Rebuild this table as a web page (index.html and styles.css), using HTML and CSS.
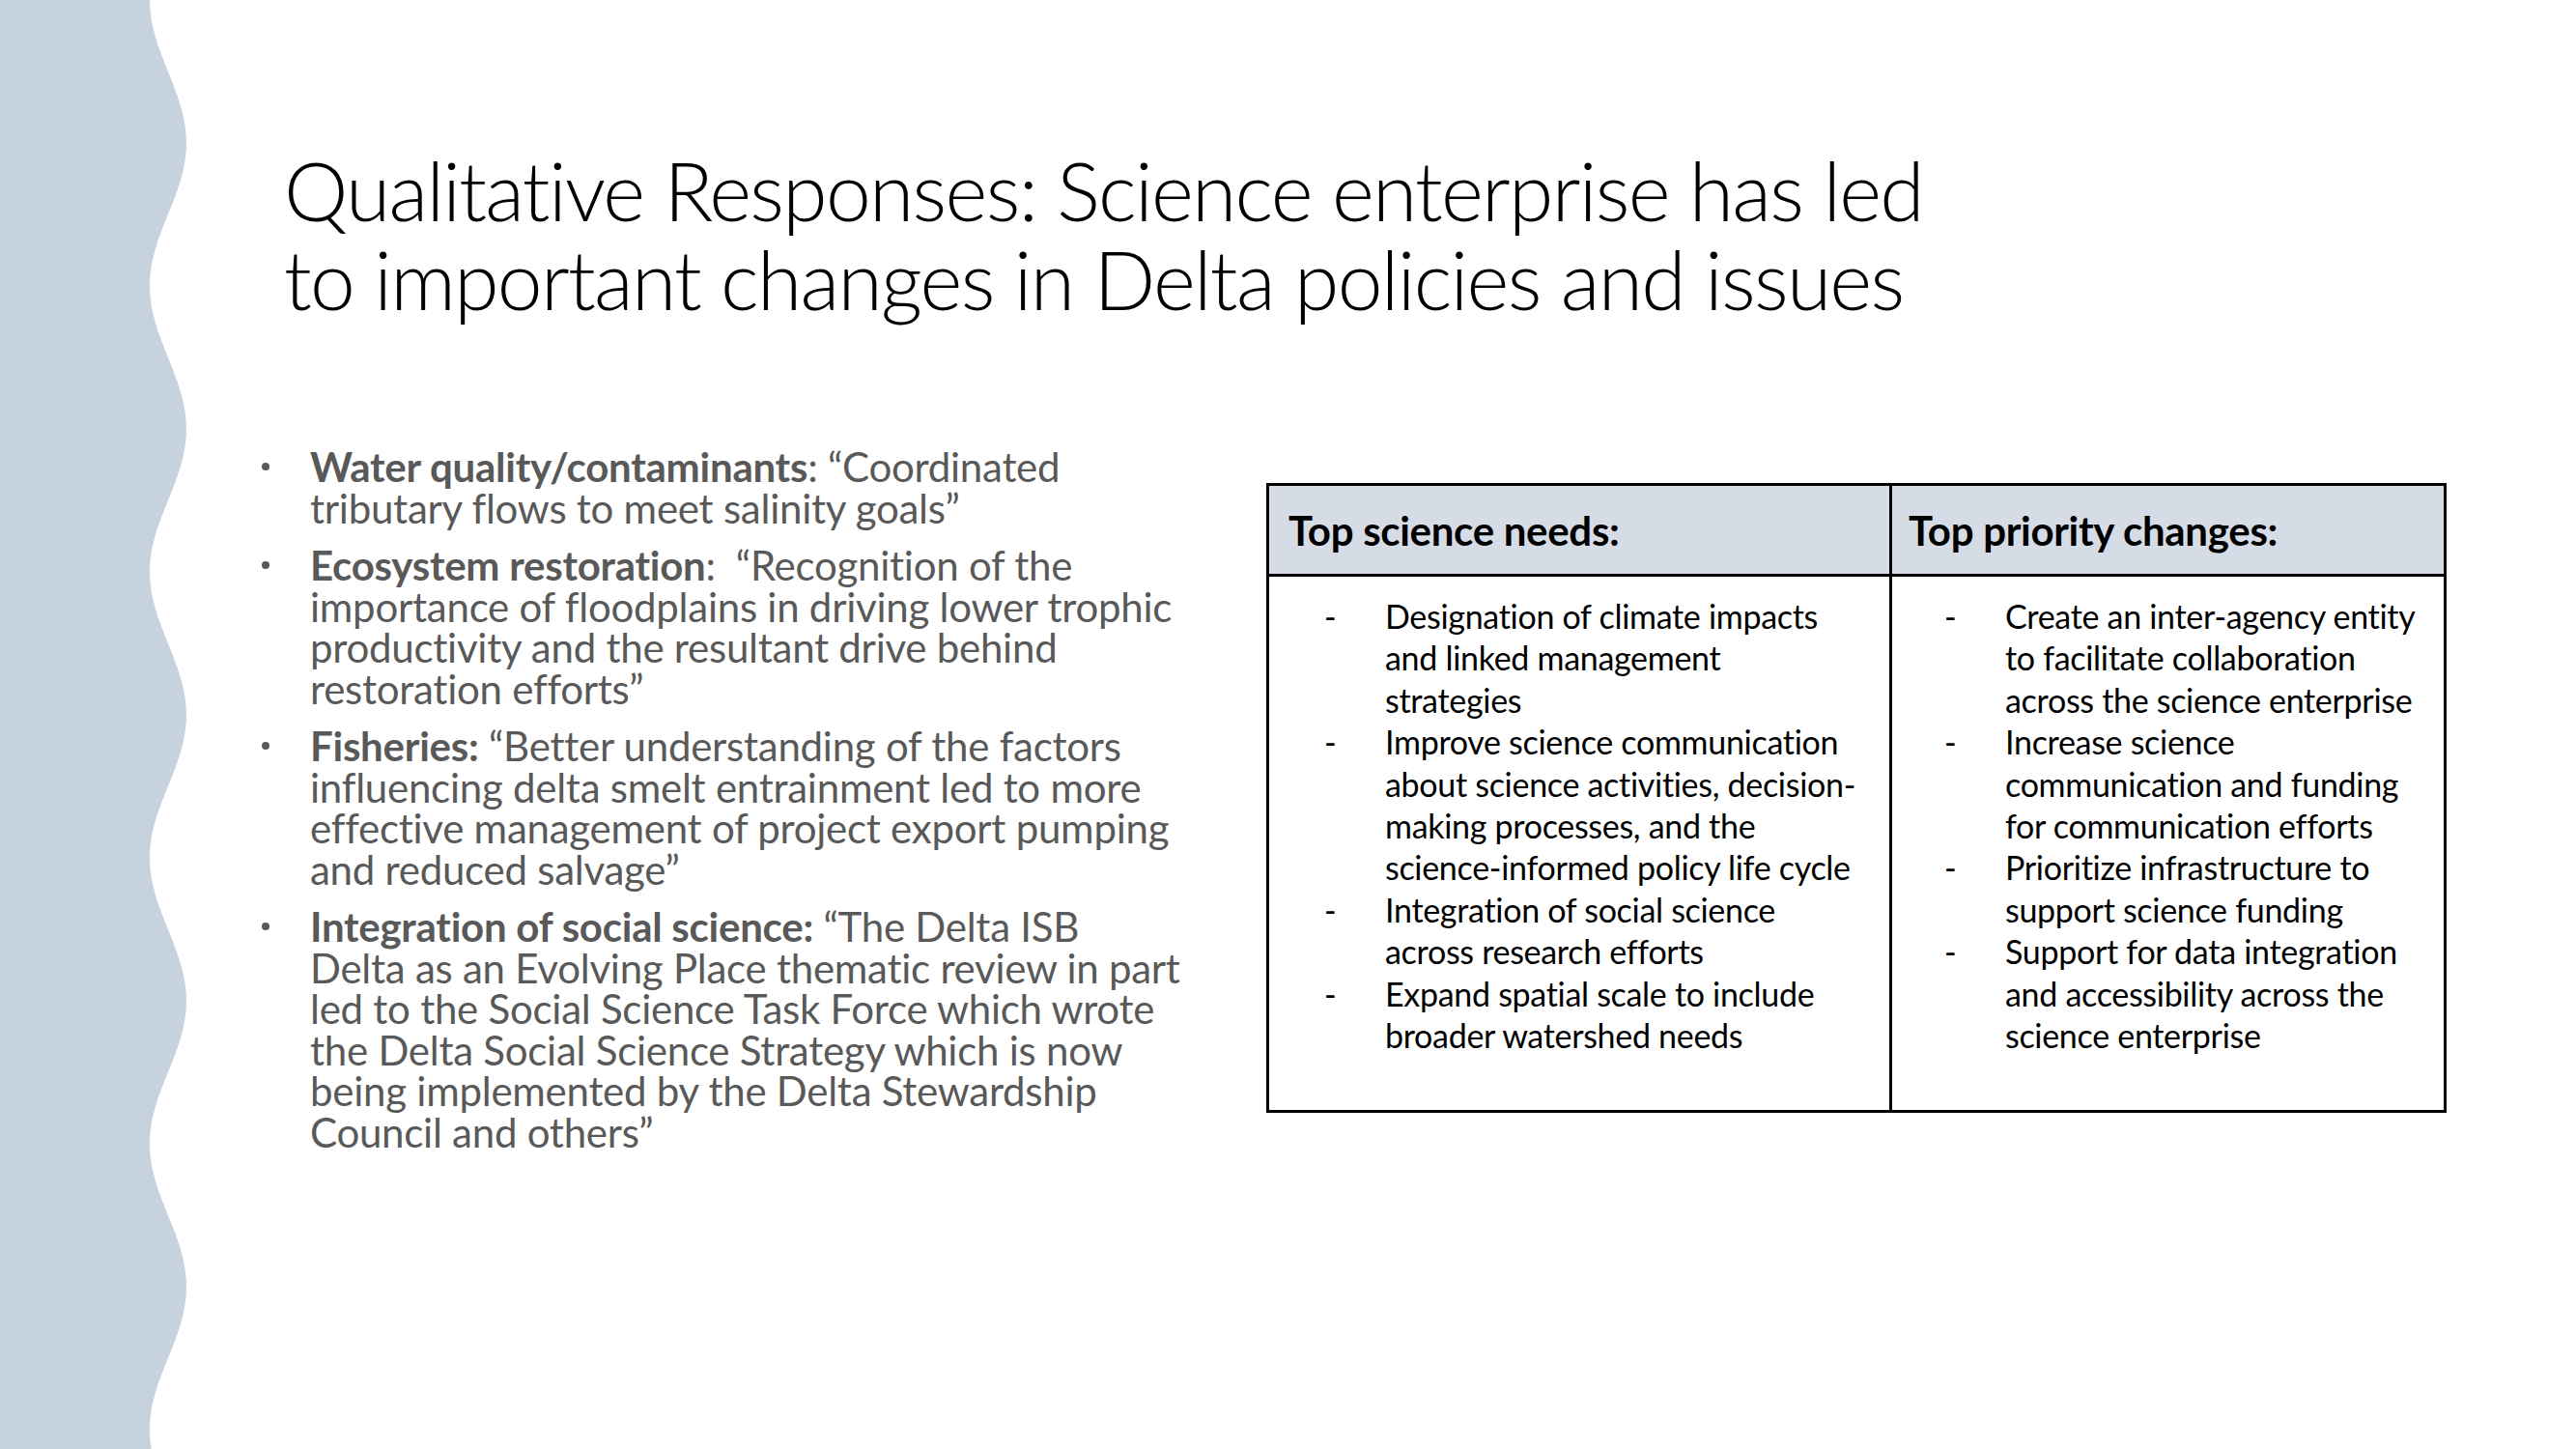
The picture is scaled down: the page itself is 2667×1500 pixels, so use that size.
FILE: index.html
```html
<!DOCTYPE html>
<html lang="en">
<head>
<meta charset="utf-8">
<title>Qualitative Responses</title>
<link rel="stylesheet" href="styles.css">
</head>
<body>
<div class="slide">
  <svg class="band" width="200" height="1500" viewBox="0 0 200 1500" aria-hidden="true">
    <path fill="#c6d3df" d="M0,0 H155 C155,54 193,94 193,148 S155,242 155,296 S193,390 193,444 S155,538 155,592 S193,686 193,740 S155,834 155,888 S193,982 193,1036 S155,1130 155,1184 S193,1278 193,1332 S155,1426 155,1480 S193,1574 193,1628 L0,1628 Z"/>
  </svg>
  <main class="content">
    <h1 class="title">Qualitative Responses: Science enterprise has led<br>to important changes in Delta policies and issues</h1>
    <div class="body">
      <ul class="bullets">
        <li><p><b>Water quality/contaminants</b>: “Coordinated<br>tributary flows to meet salinity goals”</p></li>
        <li><p><b>Ecosystem restoration</b>:&nbsp; “Recognition of the<br>importance of floodplains in driving lower trophic<br>productivity and the resultant drive behind<br>restoration efforts”</p></li>
        <li><p><b>Fisheries:</b> “Better understanding of the factors<br>influencing delta smelt entrainment led to more<br>effective management of project export pumping<br>and reduced salvage”</p></li>
        <li><p><b>Integration of social science:</b> “The Delta ISB<br>Delta as an Evolving Place thematic review in part<br>led to the Social Science Task Force which wrote<br>the Delta Social Science Strategy which is now<br>being implemented by the Delta Stewardship<br>Council and others”</p></li>
      </ul>
      <div class="needs">
        <div class="head">Top science needs:</div>
        <div class="head divider">Top priority changes:</div>
        <ul class="cell">
          <li><span class="dash">-</span><span>Designation of climate impacts<br>and linked management<br>strategies</span></li>
          <li><span class="dash">-</span><span>Improve science communication<br>about science activities, decision-<br>making processes, and the<br>science-informed policy life cycle</span></li>
          <li><span class="dash">-</span><span>Integration of social science<br>across research efforts</span></li>
          <li><span class="dash">-</span><span>Expand spatial scale to include<br>broader watershed needs</span></li>
        </ul>
        <ul class="cell divider">
          <li><span class="dash">-</span><span>Create an inter-agency entity<br>to facilitate collaboration<br>across the science enterprise</span></li>
          <li><span class="dash">-</span><span>Increase science<br>communication and funding<br>for communication efforts</span></li>
          <li><span class="dash">-</span><span>Prioritize infrastructure to<br>support science funding</span></li>
          <li><span class="dash">-</span><span>Support for data integration<br>and accessibility across the<br>science enterprise</span></li>
        </ul>
      </div>
    </div>
  </main>
</div>
</body>
</html>
```

FILE: styles.css
```css
html, body {
  margin: 0;
  padding: 0;
  background: #ffffff;
}

.slide {
  display: flex;
  width: 2667px;
  height: 1500px;
  overflow: hidden;
  background: #ffffff;
  font-family: "Lato", "Open Sans", "Liberation Sans", sans-serif;
}

.band {
  flex: none;
  display: block;
  width: 200px;
  height: 1500px;
}

.content {
  flex: 1;
  padding-left: 71px;
}

.title {
  margin: 0;
  padding: 151px 0 0 23px;
  font-weight: 300;
  font-size: 84px;
  line-height: 92px;
  letter-spacing: -1.7px;
  color: #000000;
  white-space: nowrap;
}

.body {
  display: flex;
  align-items: flex-start;
  margin-top: 127px;
}

.bullets {
  flex: none;
  width: 1000px;
  margin: 0;
  padding: 0;
  list-style: none;
  color: #595959;
  font-size: 42px;
  line-height: 42.5px;
  letter-spacing: -0.25px;
}

.bullets li {
  display: flex;
  align-items: flex-start;
}

.bullets li + li {
  margin-top: 17px;
}

.bullets li::before {
  content: "";
  flex: none;
  width: 8px;
  height: 8px;
  margin: 17px 42px 0 0;
  border-radius: 50%;
  background: #595959;
}

.bullets p {
  margin: 0;
  white-space: nowrap;
}

.bullets b {
  font-weight: 700;
}

.needs {
  flex: none;
  box-sizing: border-box;
  width: 1222px;
  height: 652px;
  margin: 38px 0 0 40px;
  border: 3px solid #000000;
  display: grid;
  grid-template-columns: 642px 1fr;
  grid-template-rows: 94px 1fr;
  color: #000000;
}

.head {
  display: flex;
  align-items: center;
  padding-left: 20px;
  background: #d6dce5;
  border-bottom: 3px solid #000000;
  font-weight: 700;
  font-size: 42px;
  letter-spacing: -0.3px;
}

.divider {
  border-left: 3px solid #000000;
}

.head.divider {
  padding-left: 17px;
}

.cell {
  margin: 0;
  padding: 19px 0 0 57px;
  list-style: none;
  font-size: 34px;
  line-height: 43.4px;
  letter-spacing: -0.3px;
  white-space: nowrap;
}

.cell.divider {
  padding-left: 54px;
}

.cell li {
  display: flex;
}

.dash {
  flex: none;
  width: 63px;
}
```
